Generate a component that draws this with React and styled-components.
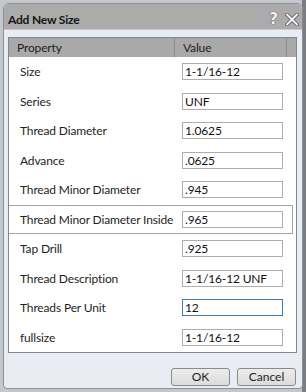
import React from "react";
import styled, { createGlobalStyle } from "styled-components";

const Global = createGlobalStyle`
  html, body { margin: 0; padding: 0; }
  body {
    width: 306px; height: 392px; overflow: hidden;
    background: linear-gradient(to right, #c4c7cc 0, #c4c7cc 302px, #7a7d82 302px);
    font-family: "Lato", "Noto Sans", sans-serif;
  }
`;

const Window = styled.div`
  box-sizing: border-box;
  margin: 3px 0 0 3px;
  width: 300px;
  height: 386px;
  border: 1px solid #8c8f94;
  border-radius: 6px 6px 4px 4px;
  background: #e9ecf2;
  display: flex;
  flex-direction: column;
  overflow: hidden;
`;

const TitleBar = styled.div`
  height: 25px;
  background: #ababab;
  border-bottom: 1px solid #c8cacd;
  display: flex;
  align-items: center;
  padding: 0 3px 0 4px;
`;

const Title = styled.div`
  flex: 1;
  font-weight: 700;
  font-size: 12px;
  letter-spacing: -0.2px;
  color: #141414;
  padding-top: 6px;
`;

const TitleButtons = styled.div`
  display: flex;
  align-items: center;
  gap: 7px;
  padding-top: 6px;
`;

const Help = styled.span`
  font-family: "DejaVu Sans", sans-serif;
  font-weight: 700;
  font-size: 15px;
  color: #f2f2f2;
  text-shadow: 0 0 1px #555, 0 0 1px #555;
  line-height: 1;
`;

const Body = styled.div`
  flex: 1;
  display: flex;
  flex-direction: column;
  padding: 7px 6px 0 4px;
`;

const Panel = styled.div`
  box-sizing: border-box;
  width: 289px;
  height: 316px;
  border: 1px solid #828790;
  background: #fff;
  display: flex;
  flex-direction: column;
`;

const Header = styled.div`
  height: 19px;
  background: #a9a9a9;
  display: grid;
  grid-template-columns: 166px 112px 1fr;
  font-size: 12px;
  letter-spacing: -0.15px;
  color: #1e1e1e;
`;

const HeadCell = styled.div`
  display: flex;
  align-items: center;
  padding-left: 8px;
  border-right: ${(p) => (p.$last ? "none" : "1px solid #8e8e8e")};
  box-sizing: border-box;
`;

const Row = styled.div`
  box-sizing: border-box;
  height: 29.5px;
  display: grid;
  grid-template-columns: 166px 1fr;
  align-items: center;
  font-size: 12px;
  letter-spacing: -0.15px;
  color: #1e1e1e;
  ${(p) =>
    p.$selected &&
    `
    border: 1px solid #a3a3a3;
    border-left: none;
    margin-right: 3px;
  `}
`;

const Label = styled.div`
  padding-left: 11px;
  white-space: nowrap;
`;

const Input = styled.input`
  box-sizing: border-box;
  width: 101px;
  height: 17px;
  margin-left: 7px;
  border: 1px solid ${(p) => (p.$focus ? "#3c7fb1" : "#abadb3")};
  padding: 0 0 0 2px;
  font-family: inherit;
  font-size: 12px;
  letter-spacing: -0.15px;
  color: #111;
  background: #fff;
  outline: none;
`;

const Footer = styled.div`
  display: flex;
  justify-content: flex-end;
  gap: 7px;
  padding-top: 15px;
`;

const Button = styled.button`
  box-sizing: border-box;
  width: 59px;
  height: 18px;
  border: 1px solid #8a8a8a;
  border-radius: 3px;
  background: linear-gradient(#ececec, #dcdcdc);
  font-family: inherit;
  font-size: 12px;
  color: #1e1e1e;
  padding: 0;
  line-height: 1;
`;

const rows = [
  ["Size", "1-1/16-12"],
  ["Series", "UNF"],
  ["Thread Diameter", "1.0625"],
  ["Advance", ".0625"],
  ["Thread Minor Diameter", ".945"],
  ["Thread Minor Diameter Inside", ".965", "sel"],
  ["Tap Drill", ".925"],
  ["Thread Description", "1-1/16-12 UNF"],
  ["Threads Per Unit", "12", "focus"],
  ["fullsize", "1-1/16-12"],
];

export default function App() {
  return (
    <>
      <Global />
      <Window>
        <TitleBar>
          <Title>Add New Size</Title>
          <TitleButtons>
            <Help>?</Help>
            <svg width="14" height="13" viewBox="0 0 14 13">
              <path d="M2 1.5 L12 11.5 M12 1.5 L2 11.5" stroke="#5a5a5a" strokeWidth="3.6" strokeLinecap="round" />
              <path d="M2 1.5 L12 11.5 M12 1.5 L2 11.5" stroke="#f2f2f2" strokeWidth="2" strokeLinecap="round" />
            </svg>
          </TitleButtons>
        </TitleBar>
        <Body>
          <Panel>
            <Header>
              <HeadCell>Property</HeadCell>
              <HeadCell>Value</HeadCell>
              <HeadCell $last />
            </Header>
            {rows.map(([k, v, f]) => (
              <Row key={k} $selected={f === "sel"}>
                <Label>{k}</Label>
                <div>
                  <Input defaultValue={v} $focus={f === "focus"} readOnly />
                </div>
              </Row>
            ))}
          </Panel>
          <Footer>
            <Button>OK</Button>
            <Button>Cancel</Button>
          </Footer>
        </Body>
      </Window>
    </>
  );
}
